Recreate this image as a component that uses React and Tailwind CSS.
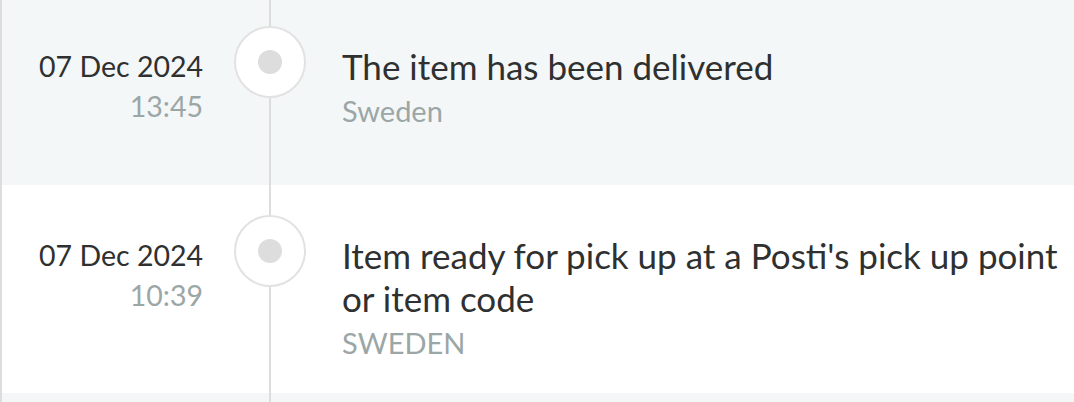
const events = [
  {
    date: '07 Dec 2024',
    time: '13:45',
    title: 'The item has been delivered',
    place: 'Sweden',
    shaded: true,
    height: 'h-[189px]',
  },
  {
    date: '07 Dec 2024',
    time: '10:39',
    title: "Item ready for pick up at a Posti's pick up point or item code",
    place: 'SWEDEN',
    shaded: false,
    height: 'h-[208px]',
  },
];

function Rail({ children }) {
  return (
    <div className="ml-[31px] flex w-[72px] shrink-0 flex-col items-center">
      {children}
    </div>
  );
}

function TimelineRow({ event }) {
  return (
    <div className={`flex ${event.height} ${event.shaded ? 'bg-[#f4f7f8]' : 'bg-white'}`}>
      <div className="w-[201px] shrink-0 pt-[50px] text-right text-[28.5px] leading-[40px]">
        <div className="text-[#2f3030]">{event.date}</div>
        <div className="text-[#9ba6a6]">{event.time}</div>
      </div>

      <Rail>
        <div className="h-[30px] w-[2px] bg-[#dddddd]" />
        <div className="flex h-[72px] w-[72px] items-center justify-center rounded-full border-2 border-[#e2e2e2] bg-white">
          <div className="h-[24px] w-[24px] rounded-full bg-[#dddddd]" />
        </div>
        <div className="w-[2px] flex-1 bg-[#dddddd]" />
      </Rail>

      <div className="ml-[36px] w-[728px] pt-[49px]">
        <div className="text-[35px] leading-[43px] text-[#2f3030]">{event.title}</div>
        <div className="mt-[5px] text-[29px] leading-[36px] text-[#9ba6a6]">{event.place}</div>
      </div>
    </div>
  );
}

export default function App() {
  return (
    <div className="h-[402px] w-[1074px] overflow-hidden bg-white" style={{ fontFamily: 'Lato, "Noto Sans", sans-serif' }}>
      <div className="-mt-[4px] border-l-2 border-[#dddddd]">
        {events.map((event, i) => (
          <TimelineRow key={i} event={event} />
        ))}
        {/* next entry, only its top edge is in view */}
        <div className="flex h-[40px] bg-[#f4f7f8]">
          <div className="w-[201px] shrink-0" />
          <Rail>
            <div className="w-[2px] flex-1 bg-[#dddddd]" />
          </Rail>
        </div>
      </div>
    </div>
  );
}
